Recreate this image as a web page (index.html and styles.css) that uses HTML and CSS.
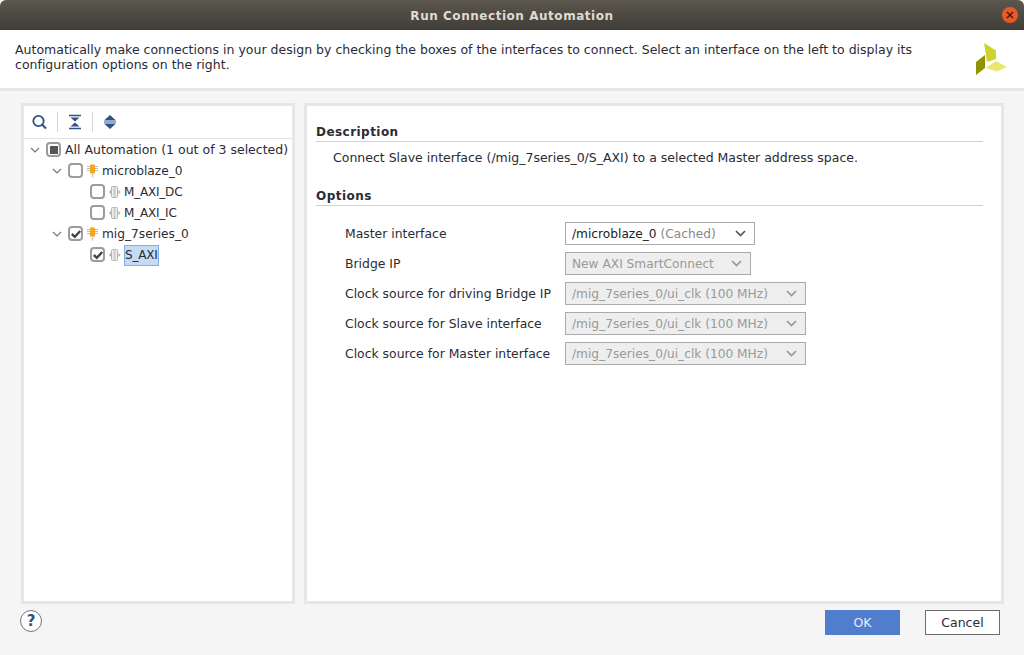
FILE: index.html
```html
<!DOCTYPE html>
<html lang="en">
<head>
<meta charset="utf-8">
<title>Run Connection Automation</title>
<link rel="stylesheet" href="styles.css">
</head>
<body>
<div class="window">
  <header class="titlebar">
    <span class="title">Run Connection Automation</span>
    <span class="close"><svg width="8" height="8" viewBox="0 0 8 8"><path d="M1 1l6 6M7 1l-6 6" stroke="#3a1508" stroke-width="1.300" fill="none"/></svg></span>
  </header>
  <section class="banner">
    <p class="banner-text">Automatically make connections in your design by checking the boxes of the interfaces to connect. Select an interface on the left to display its configuration options on the right.</p>
    <svg class="logo" width="33" height="34" viewBox="975 42 33 34">
      <path d="M984 43L996 50.500V59L987 62Z" fill="#cfd42c"/>
      <path d="M985 55L976 62V75L985 68Z" fill="#8f9400"/>
      <path d="M986 68L996 61L1007 67L997 71.500Z" fill="#e6e86f"/>
    </svg>
  </section>
  <main class="content">
    <aside class="panel tree-panel">
      <div class="toolbar">
        <svg class="tool" width="16" height="16" viewBox="0 0 16 16"><circle cx="7.500" cy="7" r="5.200" fill="none" stroke="#2f5287" stroke-width="1.800"/><path d="M11 10.500L15 14.500" stroke="#2f5287" stroke-width="2.200"/></svg>
        <span class="sep"></span>
        <svg class="tool" width="14" height="16" viewBox="0 0 14 16"><path d="M1 1.500H13M1 14.500H13" stroke="#2f5287" stroke-width="1.500"/><path d="M2.500 3.500H11.500L7 7.500Z M2.500 12.500H11.500L7 8.500Z" fill="#2f5287"/></svg>
        <span class="sep"></span>
        <svg class="tool" width="14" height="16" viewBox="0 0 14 16"><path d="M7 1L13 6.500H1Z M7 15L13 9.500H1Z" fill="#2f5287"/><path d="M1 8H13" stroke="#2f5287" stroke-width="1"/></svg>
      </div>
      <ul class="tree">
        <li class="row level0"><svg class="chev" width="10" height="6" viewBox="0 0 10 6"><path d="M1 1l4 4 4-4" fill="none" stroke="#777" stroke-width="1.200"/></svg><span class="check mixed"><i></i></span><span class="label">All Automation (1 out of 3 selected)</span></li>
        <li class="row level1"><svg class="chev" width="10" height="6" viewBox="0 0 10 6"><path d="M1 1l4 4 4-4" fill="none" stroke="#777" stroke-width="1.200"/></svg><span class="check"></span><svg class="ico" width="12" height="14" viewBox="0 0 12 14"><path d="M0 2.500H3M0 4.500H3M0 6.500H3M8 2.500H11M8 4.500H11M8 6.500H11" stroke="#bbb"/><rect x="3" y="0.500" width="5" height="9" fill="#f5a623"/><rect x="4.500" y="9.500" width="2" height="4" fill="#d5d5d5"/></svg><span class="label node">microblaze_0</span></li>
        <li class="row level2"><span class="check"></span><svg class="ico" width="12" height="14" viewBox="0 0 12 14"><path d="M0 7L2 5V9Z M11.500 7L9.500 5V9Z" fill="#aaa"/><rect x="2.500" y="1.500" width="6" height="11" rx="1" fill="#eee" stroke="#b5b5b5"/><path d="M5.500 2V12" stroke="#ccc" stroke-width="2"/></svg><span class="label tight">M_AXI_DC</span></li>
        <li class="row level2"><span class="check"></span><svg class="ico" width="12" height="14" viewBox="0 0 12 14"><path d="M0 7L2 5V9Z M11.500 7L9.500 5V9Z" fill="#aaa"/><rect x="2.500" y="1.500" width="6" height="11" rx="1" fill="#eee" stroke="#b5b5b5"/><path d="M5.500 2V12" stroke="#ccc" stroke-width="2"/></svg><span class="label tight">M_AXI_IC</span></li>
        <li class="row level1"><svg class="chev" width="10" height="6" viewBox="0 0 10 6"><path d="M1 1l4 4 4-4" fill="none" stroke="#777" stroke-width="1.200"/></svg><span class="check"><svg width="12" height="12" viewBox="0 0 12 12"><path d="M1.800 6L4.800 8.800L10.200 3" fill="none" stroke="#444" stroke-width="2.400"/></svg></span><svg class="ico" width="12" height="14" viewBox="0 0 12 14"><path d="M0 2.500H3M0 4.500H3M0 6.500H3M8 2.500H11M8 4.500H11M8 6.500H11" stroke="#bbb"/><rect x="3" y="0.500" width="5" height="9" fill="#f5a623"/><rect x="4.500" y="9.500" width="2" height="4" fill="#d5d5d5"/></svg><span class="label node">mig_7series_0</span></li>
        <li class="row level2"><span class="check"><svg width="12" height="12" viewBox="0 0 12 12"><path d="M1.800 6L4.800 8.800L10.200 3" fill="none" stroke="#444" stroke-width="2.400"/></svg></span><svg class="ico" width="12" height="14" viewBox="0 0 12 14"><path d="M0 7L2 5V9Z M11.500 7L9.500 5V9Z" fill="#aaa"/><rect x="2.500" y="1.500" width="6" height="11" rx="1" fill="#eee" stroke="#b5b5b5"/><path d="M5.500 2V12" stroke="#ccc" stroke-width="2"/></svg><span class="label selected">S_AXI</span></li>
      </ul>
    </aside>
    <section class="panel details">
      <h2 class="heading">Description</h2>
      <p class="desc">Connect Slave interface (/mig_7series_0/S_AXI) to a selected Master address space.</p>
      <h2 class="heading options-heading">Options</h2>
      <div class="form">
        <label>Master interface</label>
        <div class="select w190"><span>/microblaze_0 <em>(Cached)</em></span><svg width="11" height="7" viewBox="0 0 11 7"><path d="M1 1l4.500 4.500L10 1" fill="none" stroke="#555" stroke-width="1.700"/></svg></div>
        <label>Bridge IP</label>
        <div class="select off w186"><span>New AXI SmartConnect</span><svg width="11" height="7" viewBox="0 0 11 7"><path d="M1 1l4.500 4.500L10 1" fill="none" stroke="#999" stroke-width="1.700"/></svg></div>
        <label>Clock source for driving Bridge IP</label>
        <div class="select off w241"><span>/mig_7series_0/ui_clk (100 MHz)</span><svg width="11" height="7" viewBox="0 0 11 7"><path d="M1 1l4.500 4.500L10 1" fill="none" stroke="#999" stroke-width="1.700"/></svg></div>
        <label>Clock source for Slave interface</label>
        <div class="select off w241"><span>/mig_7series_0/ui_clk (100 MHz)</span><svg width="11" height="7" viewBox="0 0 11 7"><path d="M1 1l4.500 4.500L10 1" fill="none" stroke="#999" stroke-width="1.700"/></svg></div>
        <label>Clock source for Master interface</label>
        <div class="select off w241"><span>/mig_7series_0/ui_clk (100 MHz)</span><svg width="11" height="7" viewBox="0 0 11 7"><path d="M1 1l4.500 4.500L10 1" fill="none" stroke="#999" stroke-width="1.700"/></svg></div>
      </div>
    </section>
  </main>
  <footer class="footer">
    <span class="help">?</span>
    <div class="buttons">
      <button class="btn primary">OK</button>
      <button class="btn">Cancel</button>
    </div>
  </footer>
</div>
</body>
</html>
```
FILE: styles.css
```css
* { box-sizing: border-box; }
html, body { margin: 0; padding: 0; }
body { width: 1024px; height: 655px; overflow: hidden; background: #f5f5f5; font-family: "DejaVu Sans", sans-serif; font-size: 12.5px; color: #2b2b33; }
.window { display: flex; flex-direction: column; height: 655px; }
.titlebar { height: 30px; flex: none; display: flex; align-items: center; justify-content: center; position: relative; padding-top: 1px; background: linear-gradient(#5b574e, #3f3d37); border-radius: 6px 6px 0 0; }
.title { color: #dfdbd2; font-weight: 700; font-size: 12px; letter-spacing: 0.54px; }
.close { position: absolute; right: 6px; top: 7px; width: 16px; height: 16px; border-radius: 50%; background: #e9582a; display: flex; align-items: center; justify-content: center; }
.banner { height: 61px; flex: none; background: #fff; border-bottom: 3px solid #e6e6e6; padding: 12px 16px 0 15px; display: flex; justify-content: space-between; }
.banner-text { margin: 0; width: 915px; line-height: 15px; letter-spacing: 0.01px; }
.content { flex: none; height: 502px; margin-top: 12px; padding: 0 21px; display: flex; gap: 9px; }
.panel { border: 3px solid #e6e6e6; background: #fff; height: 501px; }
.tree-panel { width: 274px; flex: none; }
.details { width: 700px; flex: none; padding: 20px 18px 0 9px; }
.toolbar { height: 33px; border-bottom: 1px solid #e3e3e3; display: flex; align-items: center; padding-left: 7px; gap: 10px; }
.sep { width: 1px; height: 20px; background: #d5d5d5; }
.tree { list-style: none; margin: 0; padding: 0; }
.row { height: 21px; display: flex; align-items: center; white-space: nowrap; }
.level0 { padding-left: 6px; }
.level1 { padding-left: 28px; }
.level2 { padding-left: 66px; }
.chev { margin-right: 6px; flex: none; }
.check { width: 15px; height: 15px; flex: none; border: 2px solid #9c9c9c; border-radius: 4px; background: #fff; display: flex; align-items: center; justify-content: center; margin-right: 4px; }
.mixed i { width: 8px; height: 8px; background: #555; display: block; flex: none; }
.check svg { flex: none; }
.ico { margin-right: 3px; flex: none; }
.node { font-size: 12.2px; }
.tight { font-size: 12px; letter-spacing: -0.2px; }
.selected { background: #c4daf5; border: 1px solid #7fb0e8; font-size: 12px; letter-spacing: -0.2px; height: 21px; line-height: 19px; margin-top: 1px; align-self: flex-start; }
.heading { margin: 0; font-size: 12px; font-weight: 700; letter-spacing: 0.45px; border-bottom: 1px solid #d0d0d0; height: 16px; line-height: 13px; }
.desc { margin: 8px 0 0 17px; line-height: 15px; }
.options-heading { margin-top: 25px; }
.form { display: grid; grid-template-columns: 220px max-content; row-gap: 7px; margin: 16px 0 0 29px; align-items: center; }
.form label { font-size: 12.4px; }
.select { height: 23px; border: 1px solid #aaa; background: #fff; display: flex; align-items: center; justify-content: space-between; padding: 0 8px 0 6px; font-size: 12.2px; color: #222; }
.select em { font-style: normal; color: #888; }
.off { background: #eee; color: #999; }
.w190 { width: 190px; }
.w186 { width: 186px; }
.w241 { width: 241px; }
.footer { flex: 1; display: flex; justify-content: space-between; padding: 5px 24px 0 20px; align-items: flex-start; }
.help { width: 22px; height: 22px; border: 1px solid #777; border-radius: 50%; background: #fff; color: #2f5287; font-weight: 700; font-size: 15px; display: flex; align-items: center; justify-content: center; }
.buttons { display: flex; gap: 25px; }
.btn { width: 75px; height: 25px; border: 1px solid #6b6b6b; background: #fff; font: inherit; color: #2b2b33; padding: 0; }
.primary { background: #517dcd; border: none; color: #e8eef8; }
```
